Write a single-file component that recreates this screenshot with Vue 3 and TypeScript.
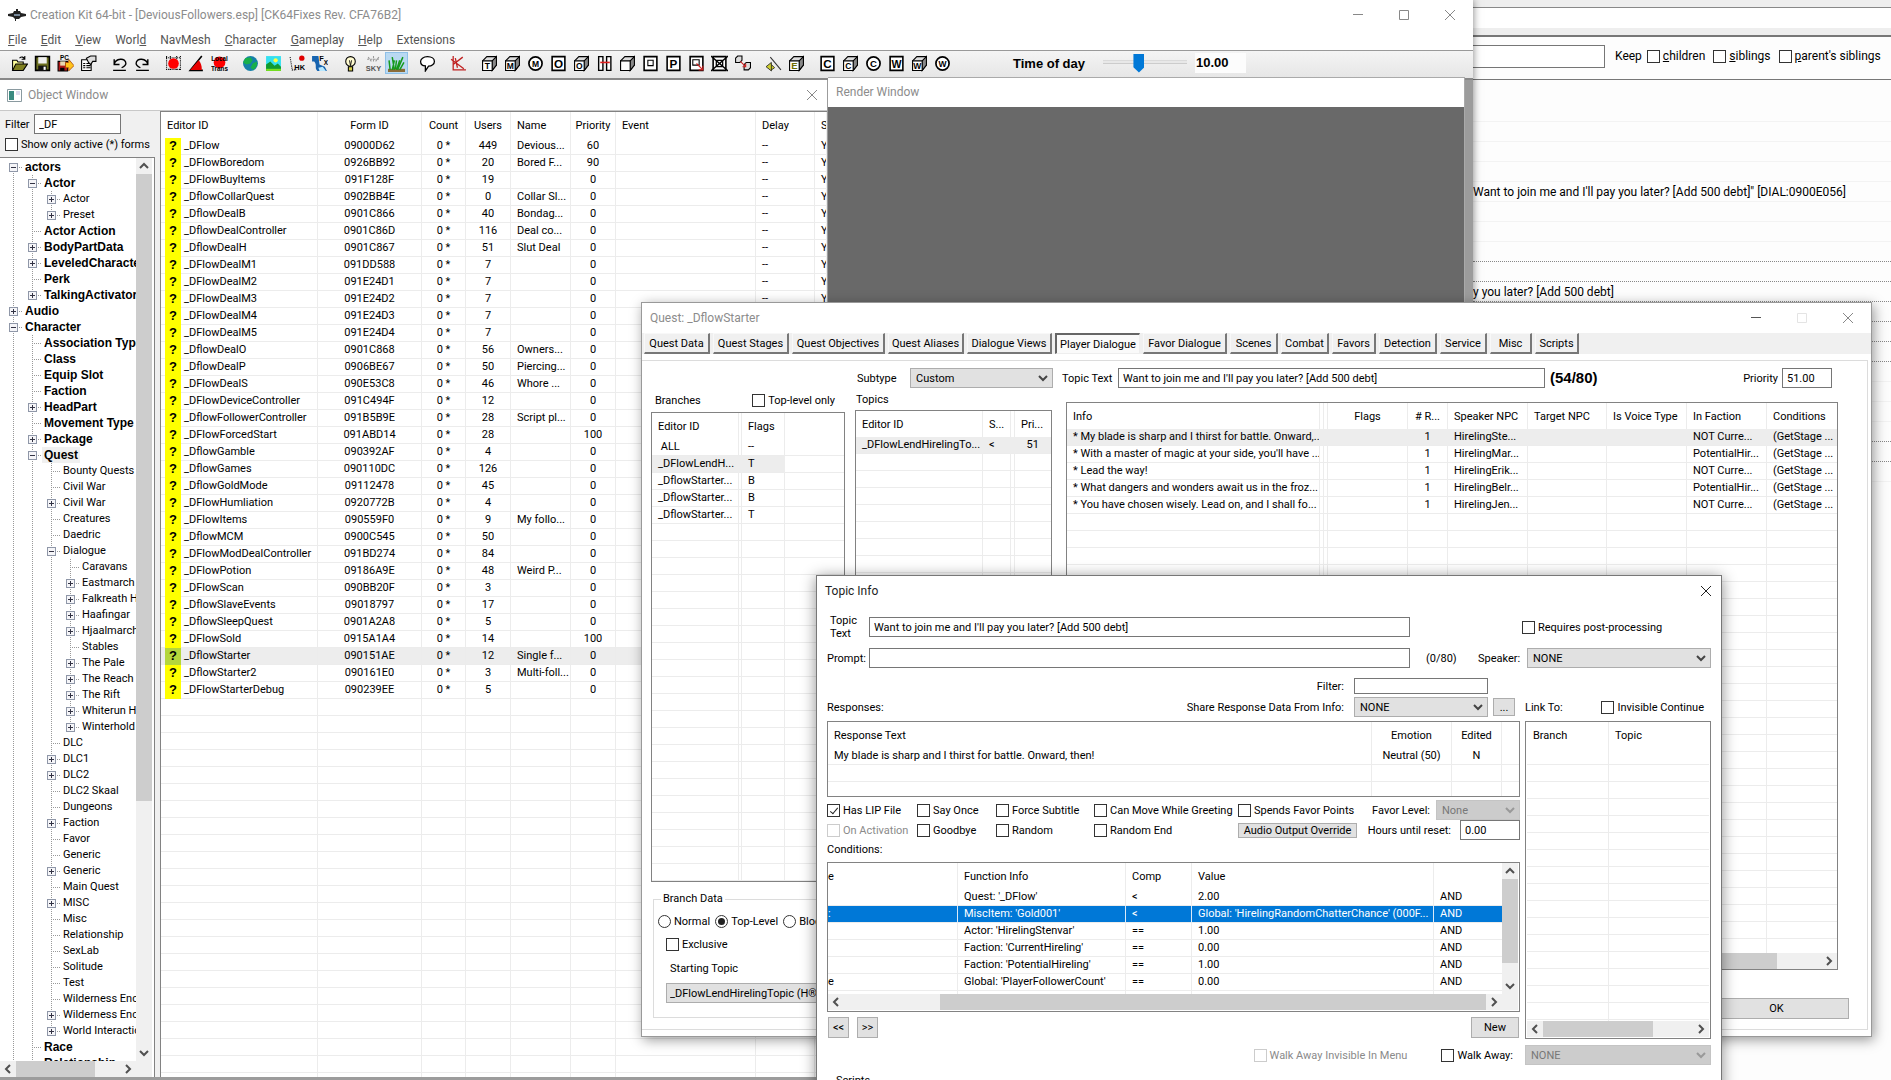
<script setup lang="ts">
import { h, ref } from 'vue'

interface Col { title: string; width?: number; center?: boolean }
interface Row { cells: string[]; selected?: number }
interface ListProps { cols: Col[]; rows: Row[]; blank?: number }
interface ScrollProps { dir: 'h' | 'v'; before: number; thumb: number; after: number }

/* Report-style list with a header, data rows and empty ruled rows */
const DataList = (p: ListProps) => {
  const cls = (c: Col, i: number, sel: number) => ({ mid: c.center, sel: i < sel })
  const line = (r: Row) =>
    h('tr', p.cols.map((c, i) => h('td', { class: cls(c, i, r.selected ?? 0) }, r.cells[i] ?? '')))
  const empty = Array.from({ length: p.blank ?? 0 }, () => ({ cells: [] as string[] }))
  return h('table', { class: 'data-list' }, [
    h('colgroup', p.cols.map((c) => h('col', { style: c.width ? { width: c.width + 'px' } : {} }))),
    h('thead', [h('tr', p.cols.map((c) => h('th', { class: { mid: c.center } }, c.title)))]),
    h('tbody', [...p.rows, ...empty].map(line)),
  ])
}

const Chevron = (p: { to: 'up' | 'down' | 'left' | 'right'; thin?: boolean }) => {
  const d = { up: 'M1 7l4-4 4 4', down: 'M1 3l4 4 4-4', left: 'M7 1L3 5l4 4', right: 'M3 1l4 4-4 4' }[p.to]
  return h('svg', { class: 'chev', viewBox: '0 0 10 10', width: 10, height: 10 }, [
    h('path', { d, fill: 'none', stroke: 'currentColor', 'stroke-width': p.thin ? 1 : 2 }),
  ])
}

const ScrollBar = (p: ScrollProps) =>
  h('div', { class: ['scroll', 'scroll-' + p.dir] }, [
    h('button', { 'aria-label': 'Scroll back' }, [h(Chevron, { to: p.dir === 'h' ? 'left' : 'up' })]),
    h('i', { style: { flex: p.before } }),
    h('b', { style: { flex: p.thumb } }),
    h('i', { style: { flex: p.after } }),
    h('button', { 'aria-label': 'Scroll forward' }, [h(Chevron, { to: p.dir === 'h' ? 'right' : 'down' })]),
  ])

const menus = [
  ['', 'F', 'ile'], ['', 'E', 'dit'], ['', 'V', 'iew'], ['Worl', 'd', ''], ['NavMesh', '', ''],
  ['', 'C', 'haracter'], ['', 'G', 'ameplay'], ['', 'H', 'elp'], ['Extensions', '', ''],
]

const glyph = (t: string, x: number, y: number, s: number, c = '#000') =>
  `<text x="${x}" y="${y}" font-size="${s}" font-weight="700" fill="${c}" text-anchor="middle" font-family="Liberation Sans, sans-serif">${t}</text>`
const cube = (inner: string) =>
  `<path d="M1.500 5.500l4-4h9v8l-4 5h-9z" fill="#ddd" stroke="#000"/><path d="M10.500 5.500l4-4v8l-4 5z" fill="#888" stroke="#000"/><path d="M1.500 5.500h9v9h-9z" fill="#fff" stroke="#000"/>${inner}`
const square = (inner: string) => `<path d="M2 1.500h12v13H2z" fill="#fff" stroke="#000" stroke-width="1.500"/>${inner}`
const ring = (inner: string) => `<circle cx="8" cy="8" r="6.200" fill="#fff" stroke="#000" stroke-width="1.600"/>${inner}`

const tools: { name: string; art: string; on?: boolean }[][] = [
  [
    { name: 'Open', art: '<path d="M1.500 14V5h4l1 1.500h5V9" fill="#ffff9a" stroke="#000"/><path d="M1.500 14.500l3-6h11l-4 6z" fill="#808020" stroke="#000"/><path d="M8 3c2-2 4-1 5 1m0-3v3h-3" fill="none" stroke="#000"/>' },
    { name: 'Save', art: '<path d="M1.500 1.500h13v13h-13z" fill="#6d7020" stroke="#000" stroke-width="1.500"/><path d="M4 2h8v6H4z" fill="#eee"/><path d="M4 10h8v5H4z" fill="#111"/><path d="M9 11h2v3H9z" fill="#fff"/>' },
    { name: 'Save for PC', art: '<path d="M1 6h9v9H1z" fill="#b01818" stroke="#000"/><path d="M3 6h5v4H3z" fill="#e8d8b0"/><path d="M3 12h4v3H3z" fill="#000"/><path d="M8 7h3V4l5 6-5 5v-3H8z" fill="#ffc31a" stroke="#a33b00" stroke-width=".7"/>' + glyph('PC', 7, 5, 6) },
    { name: 'Preferences', art: '<path d="M1.500 4.500h9v10h-9z" fill="#fff" stroke="#000"/><path d="M3 8h2m1 0h4M3 10h2m1 0h4M3 12h2m1 0h4" stroke="#000"/><path d="M6 3l4-2h5v5h-3l-2 3-2-2z" fill="#ddd" stroke="#000"/>' },
  ],
  [
    { name: 'Undo', art: '<path d="M3 4v5h5M3 9c1-6 11-7 11-1 0 2-2 3-4 4M2 14.500h12" fill="none" stroke="#000" stroke-width="1.300"/>' },
    { name: 'Redo', art: '<path d="M13 4v5H8M13 9C12 3 2 2 2 8c0 2 2 3 4 4M2 14.500h12" fill="none" stroke="#000" stroke-width="1.300"/>' },
  ],
  [
    { name: 'Snap to grid', art: '<path d="M1.500 1v14M14.500 1v14M1 2.500h14M1 13.500h14M5 1v14M11 1v14" stroke="#000" stroke-dasharray="1 1"/><circle cx="8" cy="8" r="5" fill="#f00"/>' },
    { name: 'Snap to angle', art: '<path d="M13 1L2 14.500h12" fill="none" stroke="#000" stroke-width="1.500"/><path d="M10 5L2 14h11c0-4-1-7-3-9z" fill="#e80000"/>' },
    { name: 'Local transforms', art: '<circle cx="8" cy="7" r="5.500" fill="#f00"/>' + glyph('Local', 8, 6, 6) + glyph('Trans', 8, 15, 6) },
  ],
  [
    { name: 'World', art: '<circle cx="8" cy="8" r="7" fill="#1680a8"/><path d="M3 3l5-1 2 3-2 3-4 1-3-2zm7 5l4-2v4l-3 4-3-2z" fill="#19b04a"/>' },
    { name: 'Landscape', art: '<path d="M1 1h14v14H1z" fill="#35e0f0"/><path d="M1 9l4-3 4 4 3-2 3 3v4H1z" fill="#109a30"/><circle cx="10" cy="5" r="2" fill="#ffff40"/><path d="M1 13h14v2H1z" fill="#7ae020"/>' },
    { name: 'Havok', art: '<path d="M2 2l1 6 1 6h4" fill="none" stroke="#000" stroke-dasharray="1 1"/><circle cx="13" cy="3" r="2.500" fill="#e00000"/>' + glyph('HK', 11, 14, 7) },
    { name: 'Effects', art: '<path d="M1 1h6l1 8 5 2 2 4H6c-3-3 0-6-3-9H1z" fill="#1764b0"/><path d="M7 12l4-1 3 4H8z" fill="#b8e8ff"/>' + glyph('F', 10, 6, 7) + glyph('X', 14, 9, 6) },
  ],
  [
    { name: 'Lights', art: '<circle cx="8" cy="6" r="4.500" fill="#fffbd0" stroke="#000"/><path d="M6 11h4v4H6z" fill="#d8d048" stroke="#000"/><path d="M7 5l1 5 1-5" fill="none" stroke="#000" stroke-width=".8"/>' },
    { name: 'Sky', art: '<path d="M2 4h12M3 2l3 4m2-5v6m5-5l-3 4" stroke="#999" stroke-dasharray="2 1"/>' + glyph('SKY', 8, 15, 7, '#555') },
    { name: 'Grass', on: true, art: '<path d="M0 13h16v3H0z" fill="#8b6b3a"/><path d="M2 14L1 5m3 9l2-9m0 9L4 2m4 12l3-9m-2 9l5-12m-3 12l4-7m-8 6L8 5" fill="none" stroke="#159a1c" stroke-width="1.400"/>' },
  ],
  [{ name: 'Dialogue', art: '<path d="M8 1.500c4 0 6.500 2 6.500 4.500S12 10.500 9 10.500L6 15v-4.700C3 10 1.500 8 1.500 6S4 1.500 8 1.500z" fill="#fff" stroke="#000" stroke-width="1.200"/>' }],
  [{ name: 'Axes', art: '<path d="M3 1v13h12M1 4l12 9M3 9l9-7M5 3l2 9" fill="none" stroke="#c02020" stroke-width="1.200"/>' }],
  [
    { name: 'Trigger cube', art: cube(glyph('T', 6, 13, 8)) },
    { name: 'Marker cube', art: cube(glyph('M', 6, 13, 8)) },
    { name: 'Marker sphere', art: ring(glyph('M', 8, 11, 8)) },
    { name: 'Occlusion plane', art: square(glyph('O', 8, 12, 11)) },
    { name: 'Occlusion cube', art: cube(glyph('O', 6, 13, 8)) },
    { name: 'Portal link', art: '<path d="M2.500 1.500h4v13h-4zM10 1.500h4v13h-4z" fill="#fff" stroke="#000" stroke-width="1.300"/><path d="M4 7h9" stroke="#e02020" stroke-width="1.500"/>' },
    { name: 'Room cube', art: cube('') },
    { name: 'Room square', art: square('<path d="M5.500 5h5v5h-5z" fill="none" stroke="#000"/>') },
    { name: 'Portal', art: square(glyph('P', 8, 12, 11)) },
    { name: 'Portal arrow', art: square('<path d="M4.500 4.500h6v5h-6z" fill="none" stroke="#000"/><path d="M8 8l6 6m0-4v4h-4" fill="none" stroke="#d02020"/>') },
    { name: 'Clear room', art: square('<path d="M0 1l16 14M16 1L0 15M5 5h6v6H5z" fill="none" stroke="#000" stroke-width="1.200"/>') },
    { name: 'Link rooms', art: '<path d="M1.500 3l2-2h4v4l-2 2h-4zM9.500 9l2-2h4v5l-2 2h-4z" fill="#ddd" stroke="#000"/><path d="M6 6l5 5m0-3v3H8" fill="none" stroke="#d02020"/>' },
  ],
  [
    { name: 'Light probe', art: '<path d="M5 2l10 12" stroke="#333"/><path d="M1 11l5-4v8zM6 9l3 3-3 2" fill="#cfcf30" stroke="#222" stroke-width=".8"/>' },
    { name: 'Emitter cube', art: cube(glyph('E', 6, 13, 9, '#6d6d00')) },
  ],
  [
    { name: 'Collision plane', art: square(glyph('C', 8, 12, 11)) },
    { name: 'Collision cube', art: cube(glyph('C', 6, 13, 8)) },
    { name: 'Collision sphere', art: ring(glyph('C', 8, 11, 9)) },
    { name: 'Water plane', art: square(glyph('W', 8, 12, 10)) },
    { name: 'Water cube', art: cube(glyph('W', 6, 13, 8)) },
    { name: 'Water sphere', art: ring(glyph('W', 8, 11, 8)) },
  ],
]

/* level | '+' collapsed, '-' expanded, '.' leaf | label */
const treeSource: [number, string, string][] = [
  [0, '-', 'actors'], [1, '-', 'Actor'], [2, '+', 'Actor'], [2, '+', 'Preset'], [1, '.', 'Actor Action'],
  [1, '+', 'BodyPartData'], [1, '+', 'LeveledCharacter'], [1, '.', 'Perk'], [1, '+', 'TalkingActivator'],
  [0, '+', 'Audio'], [0, '-', 'Character'], [1, '.', 'Association Type'], [1, '.', 'Class'],
  [1, '.', 'Equip Slot'], [1, '.', 'Faction'], [1, '+', 'HeadPart'], [1, '.', 'Movement Type'],
  [1, '+', 'Package'], [1, '-', 'Quest'], [2, '.', 'Bounty Quests'], [2, '.', 'Civil War'],
  [2, '+', 'Civil War'], [2, '.', 'Creatures'], [2, '.', 'Daedric'], [2, '-', 'Dialogue'],
  [3, '.', 'Caravans'], [3, '+', 'Eastmarch'], [3, '+', 'Falkreath Hold'], [3, '+', 'Haafingar'],
  [3, '+', 'Hjaalmarch'], [3, '.', 'Stables'], [3, '+', 'The Pale'], [3, '+', 'The Reach'],
  [3, '+', 'The Rift'], [3, '+', 'Whiterun Hold'], [3, '+', 'Winterhold'], [2, '.', 'DLC'],
  [2, '+', 'DLC1'], [2, '+', 'DLC2'], [2, '.', 'DLC2 Skaal'], [2, '.', 'Dungeons'], [2, '+', 'Faction'],
  [2, '.', 'Favor'], [2, '.', 'Generic'], [2, '+', 'Generic'], [2, '.', 'Main Quest'], [2, '+', 'MISC'],
  [2, '.', 'Misc'], [2, '.', 'Relationship'], [2, '.', 'SexLab'], [2, '.', 'Solitude'], [2, '.', 'Test'],
  [2, '.', 'Wilderness Encounters'], [2, '+', 'Wilderness Encounters'], [2, '+', 'World Interactions'],
  [1, '.', 'Race'], [1, '.', 'Relationship'], [0, '+', 'Items'],
]
const continues = (at: number, depth: number) => {
  for (let i = at + 1; i < treeSource.length; i++) {
    if (treeSource[i][0] === depth) return true
    if (treeSource[i][0] < depth) return false
  }
  return true
}
const tree = treeSource.slice(0, -1).map(([level, kind, label], i) => ({
  level, kind, label,
  guides: Array.from({ length: level }, (_, d) => continues(i, d)),
  more: continues(i, level),
}))

const forms: [string, string, string, string, string][] = [
  ['_DFlow', '09000D62', '449', 'Devious...', '60'], ['_DFlowBoredom', '0926BB92', '20', 'Bored F...', '90'],
  ['_DFlowBuyItems', '091F128F', '19', '', '0'], ['_DflowCollarQuest', '0902BB4E', '0', 'Collar Sl...', '0'],
  ['_DflowDealB', '0901C866', '40', 'Bondag...', '0'], ['_DflowDealController', '0901C86D', '116', 'Deal co...', '0'],
  ['_DflowDealH', '0901C867', '51', 'Slut Deal', '0'], ['_DFlowDealM1', '091DD588', '7', '', '0'],
  ['_DFlowDealM2', '091E24D1', '7', '', '0'], ['_DFlowDealM3', '091E24D2', '7', '', '0'],
  ['_DFlowDealM4', '091E24D3', '7', '', '0'], ['_DFlowDealM5', '091E24D4', '7', '', '0'],
  ['_DflowDealO', '0901C868', '56', 'Owners...', '0'], ['_DflowDealP', '0906BE67', '50', 'Piercing...', '0'],
  ['_DFlowDealS', '090E53C8', '46', 'Whore ...', '0'], ['_DFlowDeviceController', '091C494F', '12', '', '0'],
  ['_DflowFollowerController', '091B5B9E', '28', 'Script pl...', '0'], ['_DFlowForcedStart', '091ABD14', '28', '', '100'],
  ['_DflowGamble', '090392AF', '4', '', '0'], ['_DflowGames', '090110DC', '126', '', '0'],
  ['_DflowGoldMode', '09112478', '45', '', '0'], ['_DFlowHumliation', '0920772B', '4', '', '0'],
  ['_DFlowItems', '090559F0', '9', 'My follo...', '0'], ['_DflowMCM', '0900C545', '50', '', '0'],
  ['_DFlowModDealController', '091BD274', '84', '', '0'], ['_DFlowPotion', '09186A9E', '48', 'Weird P...', '0'],
  ['_DFlowScan', '090BB20F', '3', '', '0'], ['_DflowSlaveEvents', '09018797', '17', '', '0'],
  ['_DflowSleepQuest', '0901A2A8', '5', '', '0'], ['_DFlowSold', '0915A1A4', '14', '', '100'],
  ['_DflowStarter', '090151AE', '12', 'Single f...', '0'], ['_DflowStarter2', '090161E0', '3', 'Multi-foll...', '0'],
  ['_DFlowStarterDebug', '090239EE', '5', '', '0'],
]

const tabs: [string, number][] = [
  ['Quest Data', 66], ['Quest Stages', 76], ['Quest Objectives', 93], ['Quest Aliases', 76], ['Dialogue Views', 85],
  ['Player Dialogue', 85], ['Favor Dialogue', 84], ['Scenes', 48], ['Combat', 48], ['Favors', 44],
  ['Detection', 58], ['Service', 47], ['Misc', 42], ['Scripts', 44],
]
const activeTab = ref('Player Dialogue')

const branchCols: Col[] = [{ title: 'Editor ID', width: 87 }, { title: '', width: 3 }, { title: 'Flags', width: 43 }, { title: '' }]
const branchRows: Row[] = [
  { cells: [' ALL', '', '--'] }, { cells: ['_DFlowLendH...', '', 'T'], selected: 3 },
  { cells: ['_DflowStarter...', '', 'B'] }, { cells: ['_DflowStarter...', '', 'B'] }, { cells: ['_DflowStarter...', '', 'T'] },
]
const topicCols: Col[] = [{ title: 'Editor ID', width: 127 }, { title: 'S...', width: 28 }, { title: '', width: 4 }, { title: 'Pri...' }]
const topicRows: Row[] = [{ cells: ['_DFlowLendHirelingTo...', '<', '', '  51'], selected: 4 }]
const infoCols: Col[] = [
  { title: 'Info', width: 253 }, { title: '', width: 4 }, { title: '', width: 4 }, { title: 'Flags', width: 80, center: true },
  { title: '# R...', width: 40, center: true }, { title: 'Speaker NPC', width: 80 }, { title: 'Target NPC', width: 79 },
  { title: 'Is Voice Type', width: 80 }, { title: 'In Faction', width: 80 }, { title: 'Conditions' },
]
const info = (line: string, npc: string, faction: string, selected = 0): Row => ({
  cells: ['* ' + line, '', '', '', '1', npc, '', '', faction, '(GetStage ...'], selected,
})
const infoRows: Row[] = [
  info('My blade is sharp and I thirst for battle. Onward,...', 'HirelingSte...', 'NOT Curre...', 10),
  info("With a master of magic at your side, you'll have ...", 'HirelingMar...', 'PotentialHir...'),
  info('Lead the way!', 'HirelingErik...', 'NOT Curre...'),
  info('What dangers and wonders await us in the froz...', 'HirelingBelr...', 'PotentialHir...'),
  info('You have chosen wisely. Lead on, and I shall fo...', 'HirelingJen...', 'NOT Curre...'),
]
const responseCols: Col[] = [
  { title: 'Response Text', width: 544 }, { title: 'Emotion', width: 80, center: true },
  { title: 'Edited', width: 50, center: true }, { title: '' },
]
const responseRows: Row[] = [{ cells: ['My blade is sharp and I thirst for battle. Onward, then!', 'Neutral (50)', 'N'] }]
const linkCols: Col[] = [{ title: 'Branch', width: 82 }, { title: 'Topic' }]
const conditionCols: Col[] = [
  { title: 'e', width: 130 }, { title: 'Function Info', width: 168 }, { title: 'Comp', width: 66 },
  { title: 'Value', width: 242 }, { title: '' },
]
const conditionRows: Row[] = [
  { cells: ['', "Quest: '_DFlow'", '<', '2.00', 'AND'] },
  { cells: [':', "MiscItem: 'Gold001'", '<', "Global: 'HirelingRandomChatterChance' (000F...", 'AND'], selected: 5 },
  { cells: ['', "Actor: 'HirelingStenvar'", '==', '1.00', 'AND'] },
  { cells: ['', "Faction: 'CurrentHireling'", '==', '0.00', 'AND'] },
  { cells: ['', "Faction: 'PotentialHireling'", '==', '1.00', 'AND'] },
  { cells: ['e', "Global: 'PlayerFollowerCount'", '==', '0.00', 'AND'] },
]

/* '.' is an empty row closed by a dotted rule */
const behindRows = [
  '', '', '', '', 'Want to join me and I\'ll pay you later? [Add 500 debt]" [DIAL:0900E056]', '', '', '.', '.',
  'y you later? [Add 500 debt]', '.', '.', '.', '', '', '', '.', '.', '',
]
const topicText = ref("Want to join me and I'll pay you later? [Add 500 debt]")
const hour = ref(10)
</script>

<template>
  <main class="desktop">
    <section class="behind">
      <div class="strip"></div>
      <div class="keep">
        <input type="text" aria-label="Path" />
        <span>Keep</span>
        <label><input type="checkbox" /><span><u>c</u>hildren</span></label>
        <label><input type="checkbox" /><span><u>s</u>iblings</span></label>
        <label><input type="checkbox" /><span><u>p</u>arent's siblings</span></label>
      </div>
      <div class="rows">
        <div v-for="(r, i) in behindRows" :key="i" :class="{ dotted: i > 4 && r !== '' }">{{ r === '.' ? '' : r }}</div>
      </div>
    </section>

    <section class="kit">
      <header class="bar">
        <svg width="18" height="12" viewBox="0 0 18 12"><path d="M0 5l5-1 1-2h2V0h2v2h2l1 2 5 1v2l-5 1-2 2H8v2H7v-2l-2-2-5-1z" fill="#222" /><path d="M6 5h6v2H6z" fill="#789" /></svg>
        <h1>Creation Kit 64-bit - [DeviousFollowers.esp] [CK64Fixes Rev. CFA76B2]</h1>
        <div class="controls">
          <button aria-label="Minimize"><svg width="12" height="12"><path d="M1 5.500h10" /></svg></button>
          <button aria-label="Maximize"><svg width="12" height="12"><path d="M1.500 1.500h9v9h-9z" /></svg></button>
          <button aria-label="Close"><svg width="12" height="12"><path d="M1 1l10 10M11 1L1 11" /></svg></button>
        </div>
      </header>
      <nav class="menu">
        <button v-for="m in menus" :key="m.join('')">{{ m[0] }}<u>{{ m[1] }}</u>{{ m[2] }}</button>
      </nav>
      <div class="tools">
        <div v-for="(g, i) in tools" :key="i" class="tool-group">
          <button v-for="t in g" :key="t.name" :class="{ on: t.on }" :aria-label="t.name">
            <svg width="17" height="17" viewBox="0 0 16 16" v-html="t.art" />
          </button>
        </div>
        <label class="time"><span>Time of day</span><input v-model="hour" type="range" min="0" max="24" step="0.25" /></label>
        <output>{{ Number(hour).toFixed(2) }}</output>
      </div>
      <div class="workspace"></div>
    </section>

    <section class="render">
      <h2>Render Window</h2>
      <div class="viewport"></div>
    </section>

    <section class="objects">
      <header class="bar">
        <svg width="15" height="13"><path d="M.5.5h14v12H.5z" fill="#fff" stroke="#8a9aa0" /><path d="M2 2h5v9H2z" fill="#3a8a80" /><path d="M9 2h4v4H9z" fill="#dde" /></svg>
        <h2>Object Window</h2>
        <div class="controls">
          <button aria-label="Close"><svg width="12" height="12"><path d="M1 1l10 10M11 1L1 11" /></svg></button>
        </div>
      </header>
      <div class="split">
        <aside>
          <label class="filter"><span>Filter</span><input type="text" value="_DF" /></label>
          <label class="check only"><input type="checkbox" /><span>Show only active (*) forms</span></label>
          <div class="tree-box">
            <div class="tree-top">
              <ul class="tree">
                <li v-for="(n, i) in tree" :key="i">
                  <i v-for="(g, d) in n.guides" :key="d" :class="{ guide: g }"></i>
                  <i class="node" :class="{ last: !n.more, first: i === 0 }"><b v-if="n.kind !== '.'" :class="{ plus: n.kind === '+' }"></b></i>
                  <span :class="{ strong: n.level < 2, chosen: n.label === 'Quest' }">{{ n.label }}</span>
                </li>
              </ul>
              <ScrollBar dir="v" :before="0" :thumb="72" :after="28" />
            </div>
            <div class="tree-foot"><ScrollBar dir="h" :before="0" :thumb="76" :after="24" /></div>
          </div>
        </aside>
        <div class="forms">
          <table>
            <colgroup>
              <col style="width: 157px" /><col style="width: 104px" /><col style="width: 44px" /><col style="width: 45px" />
              <col style="width: 60px" /><col style="width: 45px" /><col style="width: 140px" /><col style="width: 59px" /><col />
            </colgroup>
            <thead>
              <tr>
                <th>Editor ID</th><th class="mid">Form ID</th><th class="mid">Count</th><th class="mid">Users</th>
                <th>Name</th><th class="mid">Priority</th><th>Event</th><th>Delay</th><th>S</th>
              </tr>
            </thead>
            <tbody>
              <tr v-for="f in forms" :key="f[0]" :class="{ chosen: f[0] === '_DflowStarter' }">
                <td class="id"><div><b>?</b><span>{{ f[0] }}</span></div></td>
                <td class="mid">{{ f[1] }}</td><td class="mid">0 *</td><td class="mid">{{ f[2] }}</td><td>{{ f[3] }}</td>
                <td class="mid">{{ f[4] }}</td><td></td><td>--</td><td>Y</td>
              </tr>
              <tr v-for="n in 23" :key="n"><td v-for="c in 9" :key="c"></td></tr>
            </tbody>
          </table>
        </div>
      </div>
    </section>

    <section class="quest">
      <header class="bar">
        <h2>Quest: _DflowStarter</h2>
        <div class="controls">
          <button aria-label="Minimize"><svg width="12" height="12"><path d="M1 5.500h10" stroke="#555" /></svg></button>
          <button aria-label="Maximize" disabled><svg width="12" height="12"><path d="M1.500 1.500h9v9h-9z" stroke="#e4e4e4" /></svg></button>
          <button aria-label="Close"><svg width="12" height="12"><path d="M1 1l10 10M11 1L1 11" /></svg></button>
        </div>
      </header>
      <nav class="tabs">
        <button v-for="t in tabs" :key="t[0]" :class="{ down: t[0] === activeTab }" :style="{ width: t[1] + 'px' }" @click="activeTab = t[0]">{{ t[0] }}</button>
      </nav>
      <div class="quest-body">
        <div class="branches">
          <div class="caption">
            <span>Branches</span>
            <label class="check"><input type="checkbox" /><span>Top-level only</span></label>
          </div>
          <div class="list"><DataList :cols="branchCols" :rows="branchRows" :blank="24" /></div>
          <fieldset>
            <legend>Branch Data</legend>
            <div class="radios">
              <label class="check"><input type="radio" name="kind" /><span>Normal</span></label>
              <label class="check"><input type="radio" name="kind" checked /><span>Top-Level</span></label>
              <label class="check"><input type="radio" name="kind" /><span>Blocking</span></label>
            </div>
            <label class="check exclusive"><input type="checkbox" /><span>Exclusive</span></label>
            <label class="starting" for="start-topic">Starting Topic</label>
            <span class="drop"><select id="start-topic"><option>_DFlowLendHirelingTopic (H®!)</option></select></span>
          </fieldset>
        </div>
        <div class="dialogue">
          <div class="topic-line">
            <label for="subtype" class="subtype">Subtype</label>
            <span class="drop custom"><select id="subtype"><option>Custom</option></select><Chevron to="down" thin /></span>
            <label for="topic-text" class="tt-label">Topic Text</label>
            <input id="topic-text" v-model="topicText" type="text" class="tt-input" />
            <strong>(54/80)</strong>
            <label for="priority" class="prio-label">Priority</label>
            <input id="priority" type="text" value="51.00" class="prio" />
          </div>
          <div class="lists">
            <div class="topics">
              <div class="topics-label">Topics</div>
              <div class="list"><DataList :cols="topicCols" :rows="topicRows" :blank="32" /></div>
            </div>
            <div class="infos">
              <div class="list">
                <div class="fill"><DataList :cols="infoCols" :rows="infoRows" :blank="27" /></div>
                <ScrollBar dir="h" :before="0" :thumb="94" :after="6" />
              </div>
            </div>
          </div>
          <div class="ok-line"><button class="push">OK</button></div>
        </div>
      </div>
    </section>

    <section class="topic">
      <header class="bar">
        <h2>Topic Info</h2>
        <div class="controls">
          <button aria-label="Close"><svg width="12" height="12"><path d="M1 1l10 10M11 1L1 11" stroke="#222" /></svg></button>
        </div>
      </header>
      <div class="line text-line">
        <label for="ti-text" class="lead two">Topic<br />Text</label>
        <input id="ti-text" v-model="topicText" type="text" class="long" />
        <label class="check post"><input type="checkbox" /><span>Requires post-processing</span></label>
      </div>
      <div class="line prompt-line">
        <label for="prompt" class="lead">Prompt:</label>
        <input id="prompt" type="text" class="long" />
        <span class="count">(0/80)</span>
        <label for="speaker" class="speaker">Speaker:</label>
        <span class="drop grow"><select id="speaker"><option>NONE</option></select><Chevron to="down" thin /></span>
      </div>
      <div class="cols">
        <div class="left">
          <div class="line filter-line">
            <label for="filter2">Filter:</label>
            <input id="filter2" type="text" />
          </div>
          <div class="line share-line">
            <span>Responses:</span>
            <label for="share">Share Response Data From Info:</label>
            <span class="drop"><select id="share"><option>NONE</option></select><Chevron to="down" thin /></span>
            <button class="push">...</button>
          </div>
          <div class="list responses"><DataList :cols="responseCols" :rows="responseRows" :blank="2" /></div>
          <div class="flags">
            <label class="check"><input type="checkbox" checked /><span>Has LIP File</span></label>
            <label class="check"><input type="checkbox" /><span>Say Once</span></label>
            <label class="check"><input type="checkbox" /><span>Force Subtitle</span></label>
            <label class="check"><input type="checkbox" /><span>Can Move While Greeting</span></label>
            <label class="check"><input type="checkbox" /><span>Spends Favor Points</span></label>
            <label for="favor" class="end">Favor Level:</label>
            <span class="drop off"><select id="favor" disabled><option>None</option></select><Chevron to="down" thin /></span>
            <label class="check off"><input type="checkbox" disabled /><span>On Activation</span></label>
            <label class="check"><input type="checkbox" /><span>Goodbye</span></label>
            <label class="check"><input type="checkbox" /><span>Random</span></label>
            <label class="check"><input type="checkbox" /><span>Random End</span></label>
            <button class="push audio">Audio Output Override</button>
            <div class="reset">
              <label for="hours">Hours until reset:</label>
              <input id="hours" type="text" value="0.00" />
            </div>
          </div>
          <div class="cond-label">Conditions:</div>
          <div class="list conditions">
            <div class="cond-top">
              <div class="fill"><DataList :cols="conditionCols" :rows="conditionRows" :blank="1" /></div>
              <ScrollBar dir="v" :before="0" :thumb="85" :after="15" />
            </div>
            <div class="cond-foot"><ScrollBar dir="h" :before="15" :thumb="85" :after="0" /></div>
          </div>
          <div class="line nav-line">
            <button class="push">&lt;&lt;</button>
            <button class="push">&gt;&gt;</button>
            <button class="push new">New</button>
          </div>
          <div class="line walk-line">
            <label class="check off"><input type="checkbox" disabled /><span>Walk Away Invisible In Menu</span></label>
            <label class="check"><input type="checkbox" /><span>Walk Away:</span></label>
          </div>
        </div>
        <div class="right">
          <div class="line link-line">
            <span>Link To:</span>
            <label class="check"><input type="checkbox" /><span>Invisible Continue</span></label>
          </div>
          <div class="list links">
            <div class="fill"><DataList :cols="linkCols" :rows="[]" :blank="17" /></div>
            <ScrollBar dir="h" :before="0" :thumb="73" :after="27" />
          </div>
          <span class="drop off walk"><select aria-label="Walk away topic" disabled><option>NONE</option></select><Chevron to="down" thin /></span>
        </div>
      </div>
      <div class="scripts">Scripts</div>
    </section>
  </main>
</template>

<style>
body { background: #fff; }
.data-list { border-spacing: 0; table-layout: fixed; width: 100%; }
.data-list th, .data-list td {
  box-sizing: border-box; padding: 0 0 0 6px; overflow: hidden; white-space: pre; text-align: left; font-weight: 400;
  border-right: 1px solid #ececec;
}
.data-list th { height: 26px; line-height: 25px; }
.data-list td { height: 17px; line-height: 16px; border-bottom: 1px solid #ececec; }
.data-list .mid { text-align: center; padding: 0; }
.data-list td.sel { background: #ededed; border-right-color: #ededed; }
.data-list th:last-child, .data-list td:last-child { border-right: 0; }
.scroll { display: flex; background: #f0f0f0; color: #505050; }
.scroll-v { flex-direction: column; width: 16px; }
.scroll-h { height: 16px; }
.scroll b { background: #cdcdcd; }
.scroll button { width: 16px; height: 16px; border: 0; padding: 0; background: none; color: inherit; display: flex; align-items: center; justify-content: center; flex: none; }
.chev { display: block; flex: none; }
</style>

<style scoped>
.desktop {
  --ui: Roboto, "Liberation Sans", sans-serif;
  position: relative; height: 100vh; overflow: hidden; background: #fff; color: #000; font: 11px var(--ui);
}
section { position: absolute; box-sizing: border-box; }
button, input, select { font: inherit; color: inherit; box-sizing: border-box; margin: 0; }
button { white-space: nowrap; }
h1, h2, ul { margin: 0; padding: 0; font-weight: 400; }
input[type="text"] { border: 1px solid #767676; background: #fff; height: 20px; padding: 0 4px; border-radius: 0; min-width: 0; }
input[type="checkbox"], input[type="radio"] {
  appearance: none; width: 13px; height: 13px; flex: none; border: 1px solid #333; background: #fff; display: grid; place-items: center;
}
input[type="checkbox"]:checked::after { content: ""; width: 3px; height: 7px; border: solid #222; border-width: 0 1px 1px 0; transform: rotate(40deg); }
input[type="radio"] { border-radius: 50%; }
input[type="radio"]:checked::after { content: ""; width: 7px; height: 7px; border-radius: 50%; background: #222; }
input[type="checkbox"]:disabled { border-color: #ccc; }
label, span { white-space: nowrap; }
.check { display: flex; align-items: center; gap: 3px; }
.bar { display: flex; align-items: center; height: 30px; flex: none; color: #8c8c8c; background: #fff; }
.bar h1, .bar h2 { font-size: 12px; white-space: nowrap; }
.controls { display: flex; margin-left: auto; }
.controls button { width: 46px; height: 30px; border: 0; padding: 0; background: none; }
.controls svg { display: block; margin: auto; fill: none; stroke: #888; }
.push { border: 1px solid #adadad; background: #e1e1e1; padding: 0; border-radius: 0; line-height: 1; }
.drop { position: relative; display: block; height: 20px; }
.drop select { appearance: none; width: 100%; height: 20px; border: 1px solid #adadad; background: #e1e1e1; padding: 0 5px; border-radius: 0; }
.drop .chev { position: absolute; right: 5px; top: 5px; color: #444; }
.drop.off select { background: #ccc; border-color: #c4c4c4; color: #777; opacity: 1; }
.drop.off .chev { color: #999; }
.list { border: 1px solid #828282; background: #fff; overflow: hidden; box-sizing: border-box; }
.fill { flex: 1; min-width: 0; min-height: 0; overflow: hidden; }

.behind { left: 1473px; right: 0; top: 0; bottom: 0; font-size: 12px; background: #fdfdfd; }
.strip { height: 37px; box-sizing: border-box; border-bottom: 2px solid #777; background: linear-gradient(#eee 7px, #888 7px, #888 8px, #fff 8px, #fff 28px, #eee 28px); }
.keep { display: flex; align-items: center; height: 43px; padding-bottom: 4px; box-sizing: border-box; border-bottom: 1px solid #777; }
.keep > input { width: 132px; height: 23px; border-left: 0; margin-right: 10px; }
.keep label { display: flex; align-items: center; gap: 3px; margin-left: 5px; }
.keep label + label { margin-left: 8px; }
.rows { padding-top: 22px; }
.rows div { height: 20px; line-height: 20px; box-sizing: border-box; border-bottom: 1px solid #f3f3f3; white-space: nowrap; }
.rows div.dotted { border-bottom: 1px dotted #888; }

.kit { left: 0; top: 0; width: 1473px; bottom: 0; background: #fff; box-shadow: 0 0 8px rgba(0, 0, 0, .5); display: flex; flex-direction: column; }
.kit .bar { padding-left: 8px; gap: 4px; }
.menu { height: 20px; display: flex; padding-left: 8px; gap: 14px; }
.menu button { border: 0; padding: 0; background: none; font-size: 12px; color: #555; }
.tools { height: 28px; display: flex; align-items: center; padding: 0 0 3px 8px; gap: 8px; border-top: 1px solid #999; background: linear-gradient(#f4f4f4, #e6e6e6); box-sizing: border-box; }
.tool-group { display: flex; }
.tool-group button { width: 23px; height: 22px; padding: 0; border: 0; background: none; }
.tool-group button.on { background: #b9d9f2; box-shadow: inset 0 0 0 1px #8fc0e8; }
.tool-group svg { display: block; margin: auto; }
.time { display: flex; align-items: center; gap: 18px; margin-left: 51px; font: 700 13px "Liberation Sans", sans-serif; }
.time input { appearance: none; width: 84px; height: 20px; background: linear-gradient(transparent 7px, #ccc 7px, #e8e8e8 8px, #e8e8e8 10px, #ccc 10px, #ccc 11px, transparent 11px); }
.time input::-webkit-slider-thumb { appearance: none; width: 11px; height: 19px; background: #0078d7; clip-path: polygon(0 0, 100% 0, 100% 72%, 50% 100%, 0 72%); }
.tools output { width: 51px; height: 20px; background: #fcfcfc; font: 700 13px/20px "Liberation Sans", sans-serif; box-sizing: border-box; padding-left: 1px; }
.workspace { flex: 1; background: #9c9c9c; border-top: 2px solid #888; }

.render { left: 828px; top: 77px; width: 637px; height: 240px; border: 1px solid #aaa; border-width: 1px 1px 0 0; display: flex; flex-direction: column; background: #fff; }
.render h2 { font: 12px/28px var(--ui); color: #8c8c8c; padding-left: 8px; height: 29px; }
.viewport { flex: 1; background: #696969; }

.objects { left: 0; top: 80px; width: 827px; bottom: 3px; background: #fff; display: flex; flex-direction: column; }
.objects .bar { padding-left: 7px; gap: 6px; }
.objects .controls button { width: 30px; }
.split { flex: 1; display: flex; min-height: 0; border-top: 1px solid #c8c8c8; background: #f0f0f0; }
aside { width: 155px; display: flex; flex-direction: column; flex: none; }
.filter { display: flex; align-items: center; gap: 4px; padding: 3px 0 0 5px; }
.filter span { width: 25px; }
.filter input { width: 87px; }
.only { margin: 4px 0 6px 5px; height: 13px; }
.tree-box { flex: 1; display: flex; flex-direction: column; min-height: 0; border-top: 1px solid #828282; border-right: 1px solid #828282; background: #fff; padding-right: 2px; }
.tree-top { flex: 1; display: flex; min-height: 0; }
.tree-foot { display: flex; background: #f0f0f0; padding-right: 16px; }
.tree-foot .scroll { flex: 1; }
.tree { flex: 1; min-width: 0; overflow: hidden; list-style: none; padding: 1px 0 0 4px; }
.tree li { display: flex; height: 16px; line-height: 16px; white-space: nowrap; }
.tree i { width: 19px; flex: none; }
.guide { background: repeating-linear-gradient(#999 0 1px, transparent 1px 2px) 9px 0 / 1px 100% no-repeat; }
.node { background: repeating-linear-gradient(#999 0 1px, transparent 1px 2px) 9px 0 / 1px 100% no-repeat, repeating-linear-gradient(90deg, #999 0 1px, transparent 1px 2px) 9px 8px / 9px 1px no-repeat; display: flex; align-items: center; justify-content: center; }
.node.last { background-size: 1px 8px, 9px 1px; }
.node.first { background-position: 9px 8px, 9px 8px; }
.node b { width: 9px; height: 9px; box-sizing: border-box; border: 1px solid #8f97a8; background: linear-gradient(#334 0 0) center / 5px 1px no-repeat #f5f5f8; }
.node b.plus { background: linear-gradient(#334 0 0) center / 5px 1px no-repeat, linear-gradient(#334 0 0) center / 1px 5px no-repeat #f5f5f8; }
.tree span { padding: 0 2px; }
.tree .strong { font: 700 12px/16px "Liberation Sans", sans-serif; }
.tree .chosen { background: #f0f0f0; }
.forms { flex: 1; margin-left: 5px; border-left: 1px solid #828282; border-top: 1px solid #828282; background: #fff; overflow: hidden; }
.forms table { border-spacing: 0; table-layout: fixed; width: 100%; }
.forms th, .forms td { box-sizing: border-box; padding: 0 0 0 6px; text-align: left; font-weight: 400; white-space: nowrap; overflow: hidden; border-right: 1px solid #ececec; }
.forms th { height: 26px; }
.forms td { height: 17px; line-height: 16px; border-bottom: 1px solid #ececec; }
.forms .mid { text-align: center; padding: 0; }
.forms td.id { padding-left: 4px; overflow: visible; }
.id div { display: flex; height: 16px; }
.id b { width: 16px; height: 17px; flex: none; background: #ff0; text-align: center; margin-right: 3px; font: 700 13px/16px "Liberation Sans", sans-serif; }
.forms .chosen td { background: #ededed; }
.chosen b { background: #b4d63c; }

.quest { left: 641px; top: 302px; width: 1231px; height: 735px; border: 1px solid #999; background: #fff; box-shadow: 2px 3px 12px rgba(0, 0, 0, .4); display: flex; flex-direction: column; }
.quest .bar { padding-left: 8px; }
.tabs { display: flex; gap: 3px; height: 21px; padding-left: 2px; background: #f0f0f0; flex: none; }
.tabs button { border: 1px solid #f8f8f8; border-right: 2px solid #777; border-bottom: 2px solid #777; background: #f0f0f0; padding: 0; text-align: center; }
.tabs button.down { border: 1px solid #eee; border-left: 2px solid #666; border-top: 2px solid #666; background: #fafafa; }
.quest-body { flex: 1; margin: 6px 3px 6px 0; border: 1px solid #dcdcdc; border-left: 0; display: flex; gap: 10px; padding-left: 9px; min-height: 0; }
.branches { width: 194px; display: flex; flex-direction: column; flex: none; }
.caption { display: flex; justify-content: space-between; align-items: center; padding: 28px 10px 0 4px; height: 51px; box-sizing: border-box; }
.branches .list { height: 470px; }
fieldset { margin: 9px 0 0 2px; width: 240px; height: 127px; border: 1px solid #dcdcdc; padding: 0; box-sizing: border-box; min-width: 0; }
legend { margin-left: 7px; padding: 0 2px; line-height: 16px; }
.radios { display: flex; gap: 5px; padding: 8px 0 0 4px; }
.exclusive { padding: 10px 0 0 12px; }
.starting { display: block; padding: 10px 0 6px 16px; line-height: 16px; }
fieldset .drop { margin-left: 12px; }
fieldset .drop select { padding: 0 3px; }
.dialogue { flex: 1; display: flex; flex-direction: column; min-width: 0; }
.topic-line { display: flex; align-items: center; height: 20px; margin-top: 7px; }
.subtype { width: 55px; box-sizing: border-box; padding-left: 2px; }
.custom { width: 143px; }
.tt-label { width: 56px; margin-left: 9px; }
.tt-input { width: 427px; }
.topic-line strong { font: 700 15px/20px "Liberation Sans", sans-serif; margin-left: 5px; }
.prio-label { margin-left: auto; }
.prio { width: 50px; margin: 0 35px 0 4px; }
.lists { display: flex; gap: 14px; flex: 1; min-height: 0; }
.topics { width: 197px; flex: none; display: flex; flex-direction: column; }
.topics-label { height: 22px; line-height: 24px; padding-left: 1px; }
.topics .list { flex: 1; }
.infos { flex: 1; padding: 14px 29px 0 0; min-width: 0; display: flex; }
.infos .list { flex: 1; display: flex; flex-direction: column; }
.ok-line { display: flex; justify-content: flex-end; padding: 28px 18px 10px 0; }
.ok-line .push { width: 145px; height: 21px; }

.topic { left: 816px; top: 575px; width: 906px; height: 560px; border: 1px solid #777; background: #fff; box-shadow: 0 2px 14px rgba(0, 0, 0, .45); padding: 0 10px; }
.topic .bar { color: #222; margin: 0 -10px 0 -2px; }
.topic .controls button { width: 30px; }
.line { display: flex; align-items: center; }
.text-line { height: 26px; margin-top: 8px; }
.lead { width: 42px; flex: none; }
.two { padding-left: 3px; box-sizing: border-box; line-height: 13px; }
.long { width: 541px; }
.post { margin-left: 112px; }
.prompt-line { margin-top: 8px; height: 20px; }
.count { width: 52px; margin-left: 16px; }
.speaker { width: 49px; }
.grow { flex: 1; }
.cols { display: flex; gap: 5px; margin-top: 10px; }
.left { width: 693px; flex: none; }
.right { flex: 1; padding-top: 19px; min-width: 0; }
.filter-line { justify-content: flex-end; height: 16px; margin-bottom: 3px; gap: 10px; padding-right: 32px; }
.filter-line input { width: 134px; height: 16px; }
.share-line { height: 20px; }
.share-line label { margin: 0 10px 0 auto; }
.share-line .drop { width: 134px; }
.share-line .push { width: 22px; height: 18px; margin: 0 5px; }
.link-line { height: 20px; justify-content: space-between; padding-right: 7px; }
.responses { height: 76px; margin-top: 4px; }
.flags { display: grid; grid-template-columns: 90px 79px 98px 144px 119px 79px 84px; grid-auto-rows: 20px; align-items: center; margin-top: 3px; }
.flags .end { text-align: right; padding-right: 6px; }
.reset { grid-column: span 2; display: flex; align-items: center; justify-content: flex-end; gap: 9px; }
.reset input { width: 60px; }
.audio { height: 15px; }
.off { color: #8a8a8a; }
.cond-label { height: 22px; line-height: 20px; }
.conditions { height: 150px; display: flex; flex-direction: column; padding: 0 1px 1px 0; }
.cond-top { flex: 1; display: flex; min-height: 0; }
.cond-foot { background: #f0f0f0; padding-right: 16px; }
.cond-top :deep(td:first-child), .cond-top :deep(th:first-child) { padding-left: 0; }
.cond-top :deep(td.sel) { background: #0078d7; color: #fff; border-right-color: #dbeaf8; }
.nav-line { gap: 8px; margin-top: 5px; padding: 0 1px; }
.nav-line .push { width: 21px; height: 21px; }
.nav-line .push.new { width: 48px; margin-left: auto; }
.walk-line { height: 20px; margin-top: 7px; justify-content: flex-end; gap: 34px; padding-right: 7px; }
.links { height: 318px; margin-top: 4px; display: flex; flex-direction: column; padding: 0 1px 1px; }
.walk { margin-top: 6px; }
.scripts { padding: 9px; }
</style>
